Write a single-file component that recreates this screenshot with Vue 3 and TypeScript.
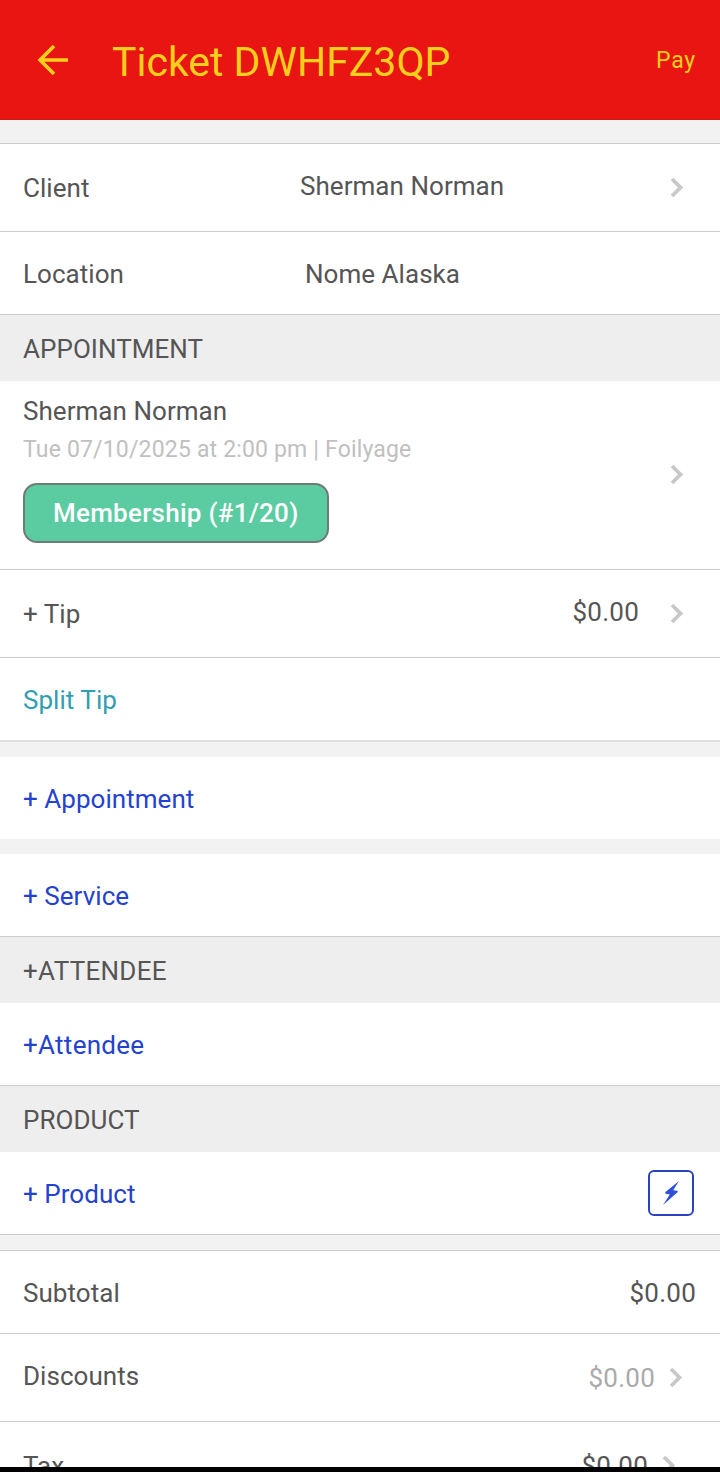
<script setup lang="ts">
interface LinkRow {
  label: string
}

const title: string = 'Ticket DWHFZ3QP'
const addAppointment: LinkRow = { label: '+ Appointment' }
const addService: LinkRow = { label: '+ Service' }
const addAttendee: LinkRow = { label: '+Attendee' }
</script>

<template>
  <div class="screen">
    <header class="bar">
      <svg class="back" width="32" height="32" viewBox="0 0 32 32">
        <path d="M31 16H3M17 2L3 16L17 30" fill="none" stroke="#f9cf1b" stroke-width="3.6" />
      </svg>
      <h1 class="title">{{ title }}</h1>
      <span class="pay">Pay</span>
    </header>

    <main class="content">
      <div class="gap gap-top"></div>

      <div class="row tall">
        <span class="label">Client</span>
        <span class="value client">Sherman Norman</span>
        <svg class="chevron" width="14" height="22" viewBox="0 0 14 22"><path d="M2 2L10.5 10.5L2 19" /></svg>
      </div>
      <div class="row">
        <span class="label nudge">Location</span>
        <span class="value location nudge">Nome Alaska</span>
      </div>

      <h2 class="section"><span>APPOINTMENT</span></h2>
      <div class="row appointment">
        <div class="details">
          <span class="name">Sherman Norman</span>
          <span class="when">Tue 07/10/2025 at 2:00 pm | Foilyage</span>
          <span class="badge"><span>Membership (#1/20)</span></span>
        </div>
        <svg class="chevron" width="14" height="22" viewBox="0 0 14 22"><path d="M2 2L10.5 10.5L2 19" /></svg>
      </div>
      <div class="row tall">
        <span class="label">+ Tip</span>
        <span class="amount tip">$0.00</span>
        <svg class="chevron" width="14" height="22" viewBox="0 0 14 22"><path d="M2 2L10.5 10.5L2 19" /></svg>
      </div>
      <div class="row split">
        <span class="label teal nudge">Split Tip</span>
      </div>

      <div class="gap"></div>
      <div class="row plain">
        <span class="label link nudge">{{ addAppointment.label }}</span>
      </div>
      <div class="gap"></div>
      <div class="row">
        <span class="label link nudge">{{ addService.label }}</span>
      </div>

      <h2 class="section attendee"><span>+ATTENDEE</span></h2>
      <div class="row">
        <span class="label link nudge spaced">{{ addAttendee.label }}</span>
      </div>

      <h2 class="section"><span>PRODUCT</span></h2>
      <div class="row">
        <span class="label link nudge">+ Product</span>
        <button class="quick" type="button" aria-label="Quick add">
          <svg width="18" height="26" viewBox="0 0 18 26">
            <path d="M17 1L3.2 12.2L3.6 13.8L7.8 14.4L1 25L15.8 12L15.4 10.8L11.2 10.2Z" fill="#2f4fd8" />
          </svg>
        </button>
      </div>

      <div class="gap lined"></div>
      <div class="row">
        <span class="label nudge">Subtotal</span>
        <span class="amount subtotal nudge">$0.00</span>
      </div>
      <div class="row tall">
        <span class="label raised">Discounts</span>
        <span class="amount muted">$0.00</span>
        <svg class="chevron discount" width="14" height="22" viewBox="0 0 14 22"><path d="M2 2L10.5 10.5L2 19" /></svg>
      </div>
      <div class="row tall">
        <span class="label">Tax</span>
        <span class="amount tax">$0.00</span>
        <svg class="chevron taxed" width="14" height="22" viewBox="0 0 14 22"><path d="M2 2L10.5 10.5L2 19" /></svg>
      </div>
    </main>
    <div class="system"></div>
  </div>
</template>

<style>
body {
  margin: 0;
  overflow: hidden;
}
</style>

<style scoped>
.screen {
  width: 720px;
  height: 1472px;
  overflow: hidden;
  display: flex;
  flex-direction: column;
  background: #f2f2f2;
  color: #555;
  font-family: Roboto, sans-serif;
  font-size: 26px;
  line-height: 30px;
  letter-spacing: 0.04px;
  white-space: nowrap;
}
.bar {
  flex: none;
  box-sizing: border-box;
  height: 120px;
  display: flex;
  align-items: center;
  padding: 0 24px 0 37px;
  background: #e81513;
  border-bottom: 1px solid #cf1a18;
  color: #f9cf1b;
}
.back {
  flex: none;
}
.title {
  flex: 1;
  margin: 5px 0 0 43px;
  font-size: 41px;
  line-height: 48px;
  font-weight: 400;
  letter-spacing: 0;
}
.pay {
  padding-top: 2px;
  font-size: 23px;
  letter-spacing: 0.8px;
}
.content {
  flex: 1;
  min-height: 0;
  overflow: hidden;
}
.gap {
  height: 15px;
  background: #f2f2f2;
}
.gap-top {
  height: 23px;
  border-bottom: 1px solid #ccc;
}
.lined {
  border-bottom: 1px solid #ccc;
}
.row {
  display: flex;
  align-items: center;
  height: 82px;
  padding: 0 24px 0 23px;
  background: #fff;
  border-bottom: 1px solid #ccc;
}
.tall {
  height: 87px;
}
.plain {
  border-bottom: 0;
}
.split {
  border-bottom: 2px solid #dfdfdf;
}
.nudge {
  padding-top: 2px;
}
.raised {
  padding-bottom: 3px;
}
.label {
  width: 277px;
}
.value {
  flex: 1;
}
.client {
  padding-bottom: 3px;
}
.location {
  padding-left: 5px;
}
.chevron {
  flex: none;
  margin-right: 12px;
  fill: none;
  stroke: #c7c7cc;
  stroke-width: 3.8;
}
.section {
  display: flex;
  align-items: center;
  height: 66px;
  margin: 0;
  padding: 0 23px;
  background: #eee;
  font-size: 26px;
  font-weight: 400;
}
.section span {
  padding-top: 1px;
}
.attendee,
.spaced {
  letter-spacing: 0.28px;
}
.appointment {
  height: 188px;
}
.details {
  flex: 1;
  display: flex;
  flex-direction: column;
  align-items: flex-start;
  padding-bottom: 12px;
}
.when {
  margin: 9px 0 18px;
  font-size: 23px;
  letter-spacing: 0.17px;
  color: #c0c0c0;
}
.badge {
  box-sizing: border-box;
  width: 306px;
  height: 60px;
  display: flex;
  align-items: center;
  padding: 0 28px;
  border: 2px solid #6f7b78;
  border-radius: 14px;
  background: #5bcca2;
  color: #fff;
  font-weight: 500;
  letter-spacing: 0.26px;
}
.amount {
  margin-left: auto;
  letter-spacing: 0.25px;
}
.tip {
  margin-right: 31px;
  padding-bottom: 3px;
}
.teal {
  color: #319eb2;
}
.link {
  color: #2442d0;
}
.quick {
  flex: none;
  display: flex;
  align-items: center;
  justify-content: center;
  box-sizing: border-box;
  width: 46px;
  height: 46px;
  margin: 0 2px 0 auto;
  padding: 0;
  border: 2px solid #2a44c0;
  border-radius: 6px;
  background: #fff;
}
.muted {
  margin-right: 14px;
  color: #aaa;
}
.discount {
  margin-right: 13px;
}
.tax {
  margin-right: 14px;
}
.taxed {
  margin-right: 20px;
}
.system {
  flex: none;
  height: 5px;
  background: #000;
}
</style>
